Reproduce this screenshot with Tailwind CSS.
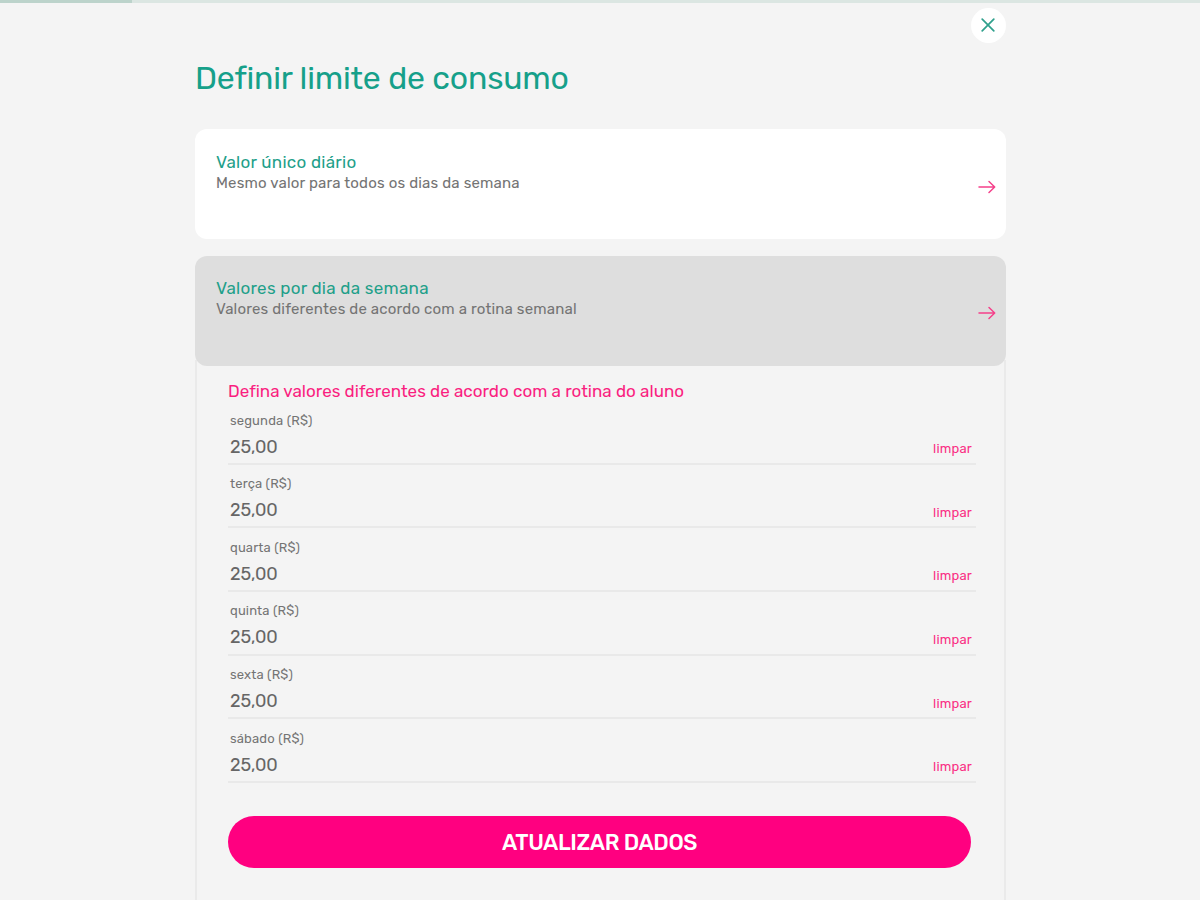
<!DOCTYPE html>
<html lang="pt-BR">
<head>
    <meta charset="UTF-8">
    <meta name="viewport" content="width=device-width, initial-scale=1.0">
    <title>Definir limite de consumo</title>
    <script src="https://cdn.jsdelivr.net/npm/@tailwindcss/browser@4"></script>
</head>
<body class="bg-[#f4f4f4] font-['Rubik',Roboto,sans-serif] text-[#747474] h-screen overflow-hidden">

    <!-- Progress bar -->
    <div class="h-[3px] bg-[#dbe6e2]">
        <div class="h-full w-[11%] bg-[#bcd3cb]"></div>
    </div>

    <div class="w-[811px] ml-[195px]">
        <!-- Close button -->
        <div class="flex justify-end pt-[5px]">
            <button class="w-[35px] h-[35px] rounded-full bg-white flex items-center justify-center text-[#2fa08c]" aria-label="Fechar">
                <svg class="w-[14px] h-[14px] -mt-[1px] -ml-[1px]" viewBox="0 0 14 14" fill="none" stroke="currentColor" stroke-width="1.7" stroke-linecap="round">
                    <path d="M1.2 1.2L12.8 12.8M12.8 1.2L1.2 12.8"/>
                </svg>
            </button>
        </div>

        <h1 class="mt-[15px] h-[40px] leading-[40px] text-[32px] tracking-[-0.2px] text-[#16a08a]">Definir limite de consumo</h1>

        <!-- Options -->
        <div class="mt-[31px] h-[110px] rounded-xl bg-white flex items-center justify-between pl-[21px] pr-[10px]">
            <div class="self-start pt-[23px]">
                <h2 class="h-[21px] leading-[21px] text-[17px] tracking-[0.27px] text-[#1fa08a]">Valor único diário</h2>
                <p class="h-[21px] leading-[21px] text-[15px] tracking-[0.18px]">Mesmo valor para todos os dias da semana</p>
            </div>
            <svg class="w-[18px] h-[14px] mt-[5px] text-[#f5408a]" viewBox="0 0 18 14" fill="none" stroke="currentColor" stroke-width="1.5" stroke-linecap="round" stroke-linejoin="round">
                <path d="M1 7H16.5M11 1.5L16.7 7L11 12.5"/>
            </svg>
        </div>

        <div class="relative mt-[17px] h-[110px] rounded-xl bg-[#dedede] flex items-center justify-between pl-[21px] pr-[10px]">
            <div class="self-start pt-[22px]">
                <h2 class="h-[21px] leading-[21px] text-[17px] tracking-[0.27px] text-[#1fa08a]">Valores por dia da semana</h2>
                <p class="h-[21px] leading-[21px] text-[15px] tracking-[0.18px]">Valores diferentes de acordo com a rotina semanal</p>
            </div>
            <svg class="w-[18px] h-[14px] mt-[3px] text-[#f5408a]" viewBox="0 0 18 14" fill="none" stroke="currentColor" stroke-width="1.5" stroke-linecap="round" stroke-linejoin="round">
                <path d="M1 7H16.5M11 1.5L16.7 7L11 12.5"/>
            </svg>
        </div>

        <!-- Weekday values -->
        <div class="-mt-[6px] h-[560px] border-x-2 border-[#eaeaea] pt-[20px] pl-[31px] pr-[28px]">
            <h3 class="h-[21px] leading-[22px] text-[17px] tracking-[0.03px] text-[#fa1e80]">Defina valores diferentes de acordo com a rotina do aluno</h3>

            <div id="days"></div>

            <button class="mt-[33px] w-[743px] h-[52px] pt-[2px] rounded-full bg-[#ff0080] text-white text-[22px] font-medium tracking-[-0.4px]">ATUALIZAR DADOS</button>
        </div>
    </div>

    <script>
        const days = ['segunda', 'terça', 'quarta', 'quinta', 'sexta', 'sábado'];

        document.getElementById('days').innerHTML = days.map(day => `
            <div class="h-[63.67px] border-b-2 border-[#e9e9e9] pl-[2px] pr-[4px] pt-[9.5px] flex justify-between">
                <div>
                    <label class="block h-[20px] leading-[20px] text-[13px] tracking-[0.15px]">${day} (R$)</label>
                    <div class="mt-[3px] h-[26px] leading-[26px] text-[18px] tracking-[-0.1px] text-[#666]">25,00</div>
                </div>
                <a class="mt-[27.5px] h-[22px] leading-[22px] text-[13px] tracking-[0.2px] text-[#fa2f84]">limpar</a>
            </div>`).join('');
    </script>
</body>
</html>
